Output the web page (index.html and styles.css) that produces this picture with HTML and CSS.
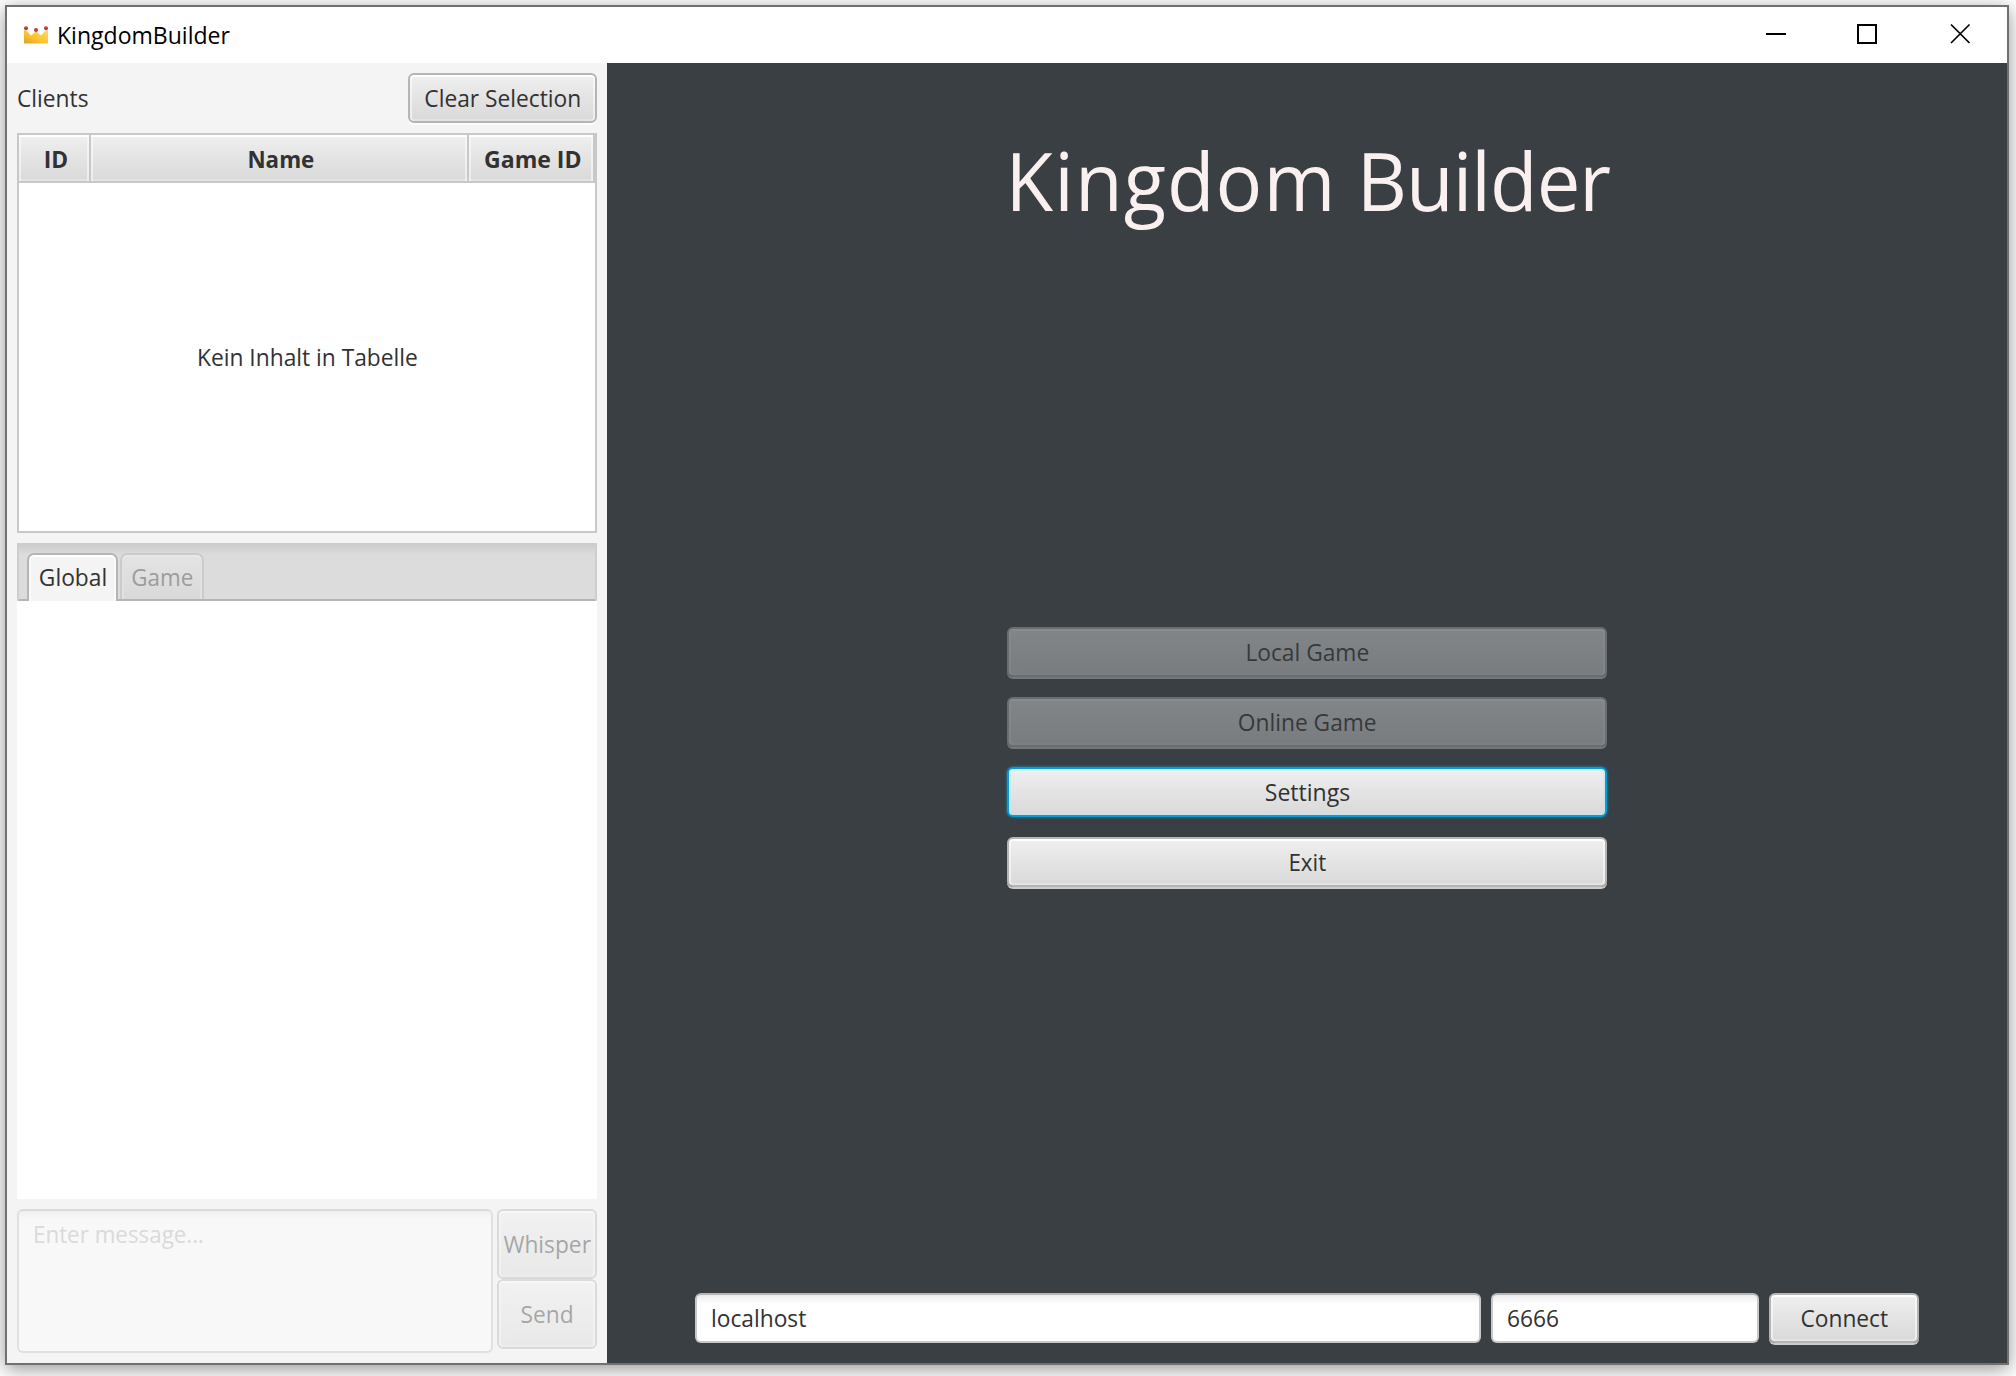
FILE: index.html
```html
<!DOCTYPE html>
<html lang="en">
<head>
<meta charset="utf-8">
<title>KingdomBuilder</title>
<link rel="stylesheet" href="styles.css">
</head>
<body>
<div class="window">
  <header class="titlebar">
    <svg class="crown" width="24" height="18" viewBox="0 0 24 18">
      <defs><linearGradient id="gold" x1="0" y1="1" x2="1" y2="0"><stop offset="0" stop-color="#dba520"/><stop offset=".45" stop-color="#fbc531"/><stop offset="1" stop-color="#ffd66b"/></linearGradient></defs>
      <path d="M0 4.5L2 4L7 9.5L11 6H13L17 9.5L22 4L24 4.5V17.5H0Z" fill="url(#gold)"/>
      <g fill="#bf3b38"><circle cx="2" cy="2.2" r="2"/><circle cx="12" cy="4" r="2"/><circle cx="22" cy="2.2" r="2"/></g>
    </svg>
    <span class="app-name"><span class="t left wide">KingdomBuilder</span></span>
    <svg class="controls" width="206" height="22" viewBox="0 0 206 22" fill="none" stroke="#000" stroke-width="2">
      <path d="M0 11H20M92 2H110V20H92Z"/>
      <path d="M185 1.500L203.500 20M203.500 1.500L185 20" stroke-width="1.700"/>
    </svg>
  </header>
  <div class="body">
    <aside class="sidebar">
      <div class="clients-bar">
        <span class="t left">Clients</span>
        <button class="btn clear"><span class="t">Clear Selection</span></button>
      </div>
      <div class="table">
        <div class="thead">
          <div class="th"><span class="t">ID</span></div>
          <div class="th"><span class="t narrow">Name</span></div>
          <div class="th"><span class="t wide">Game ID</span></div>
        </div>
        <div class="empty"><span class="t">Kein Inhalt in Tabelle</span></div>
      </div>
      <div class="tabs">
        <div class="tab tab-global"><span class="t">Global</span></div>
        <div class="tab tab-game"><span class="t narrow">Game</span></div>
      </div>
      <div class="chat"></div>
      <div class="composer">
        <div class="message"><span class="t left narrow">Enter message...</span></div>
        <div class="actions">
          <button class="btn"><span class="t">Whisper</span></button>
          <button class="btn"><span class="t">Send</span></button>
        </div>
      </div>
    </aside>
    <main class="main">
      <h1 class="heading"><span class="t wide"><span class="loose">Kingdom</span> <span class="tight">Builder</span></span></h1>
      <nav class="menu">
        <button class="btn off"><span class="t">Local Game</span></button>
        <button class="btn off"><span class="t">Online Game</span></button>
        <button class="btn focus"><span class="t wide">Settings</span></button>
        <button class="btn"><span class="t narrow">Exit</span></button>
      </nav>
      <div class="connect">
        <div class="field host"><span class="t left">localhost</span></div>
        <div class="field port"><span class="t left">6666</span></div>
        <button class="btn go"><span class="t">Connect</span></button>
      </div>
    </main>
  </div>
</div>
</body>
</html>
```
FILE: styles.css
```css
* { box-sizing: border-box; }
body {
  margin: 0;
  padding: 5px 7px 11px 5px;
  height: 1376px;
  overflow: hidden;
  background: #fff;
  color: #323232;
  font: 24px/32px "Open Sans", "Noto Sans", sans-serif;
}
/* slightly condensed label text */
.t { display: inline-block; white-space: nowrap; transform: scaleX(.948); }
.wide { transform: scaleX(.96); }
.narrow { transform: scaleX(.932); }
.left { transform-origin: left; }
.loose { letter-spacing: 1.1px; }
.tight { letter-spacing: -1px; }
.window {
  display: flex;
  flex-direction: column;
  height: 1360px;
  border: 2px solid #707070;
  box-shadow: 0 4px 18px rgba(0, 0, 0, .42);
}
.titlebar {
  display: flex;
  align-items: center;
  height: 56px;
  padding: 0 35px 0 17px;
  background: #fff;
  color: #000;
}
.app-name { flex: 1; padding-left: 9px; }
.controls { margin-bottom: 2px; }
.body { display: flex; flex: 1; min-height: 0; }

.sidebar {
  display: flex;
  flex-direction: column;
  width: 600px;
  padding: 10px;
  background: #f4f4f4;
}
.clients-bar {
  display: flex;
  align-items: center;
  justify-content: space-between;
  height: 50px;
  margin-bottom: 10px;
}
.btn {
  display: flex;
  align-items: center;
  justify-content: center;
  height: 50px;
  padding: 0;
  border: 2px solid #b5b5b5;
  border-radius: 6px;
  background: linear-gradient(#efefef, #d9d9d9);
  box-shadow: inset 0 2px #fff, inset 2px 0 rgba(255, 255, 255, .5), inset -2px 0 rgba(255, 255, 255, .5), inset 0 -2px rgba(255, 255, 255, .25), 0 2px rgba(255, 255, 255, .73);
  color: inherit;
  font: inherit;
}
.clear { width: 189px; }

.table { height: 400px; border: 2px solid #c8c8c8; background: #fff; }
.thead {
  display: grid;
  grid-template-columns: 72px 378px 126px;
  width: 576px;
  height: 48px;
  box-shadow: 2px 0 #c8c8c8;
}
.th {
  display: flex;
  align-items: center;
  justify-content: center;
  padding: 2px 0 0 3px;
  border: solid #c8c8c8;
  border-width: 0 2px 2px 0;
  background: linear-gradient(#efefef, #d9d9d9);
  box-shadow: inset 0 2px #fff, inset 2px 0 rgba(255, 255, 255, .5), inset -2px 0 rgba(255, 255, 255, .5), inset 0 -2px rgba(255, 255, 255, .25);
  font-weight: 700;
}
.empty { display: flex; align-items: center; justify-content: center; height: 348px; }

.tabs {
  display: flex;
  align-items: flex-end;
  gap: 2px;
  height: 58px;
  margin-top: 10px;
  padding-left: 10px;
  background: linear-gradient(#b5b5b5, #b5b5b5) bottom / 100% 2px no-repeat, linear-gradient(#cacaca, #dcdcdc 12px);
  box-shadow: inset 2px 2px #cdcdcd, inset -2px 0 #cdcdcd;
}
.tab {
  display: flex;
  align-items: center;
  justify-content: center;
  padding-left: 1px;
  border: 2px solid #b5b5b5;
  border-bottom: 0;
  border-radius: 7px 7px 0 0;
}
.tab-global {
  width: 91px;
  height: 48px;
  padding-bottom: 2px;
  background: #f4f4f4;
  box-shadow: inset 0 2px #fff, inset 2px 0 #fafafa, inset -2px 0 #fafafa;
}
.tab-game {
  width: 84px;
  height: 46px;
  margin-bottom: 2px;
  border-color: #cbcbcb;
  background: linear-gradient(#e4e4e4, #d9d9d9);
  box-shadow: inset 0 2px #e8e8e8, inset 2px 0 #e1e1e1, inset -2px 0 #e1e1e1;
  color: #9c9c9c;
}
.chat { flex: 1; background: #fff; }
.composer { display: flex; gap: 4px; height: 144px; margin-top: 10px; }
.message {
  width: 476px;
  padding: 7px 14px;
  border: 2px solid #e0e0e0;
  border-top-color: #dadada;
  border-radius: 6px;
  background: linear-gradient(#f0f0f0, #f8f8f8 8px);
  color: #dadada;
}
.actions { width: 100px; }
.actions .btn { width: 100%; height: 70px; opacity: .4; }

.main {
  display: flex;
  flex-direction: column;
  align-items: center;
  width: 1400px;
  background: #3a3f43;
}
.heading { margin: 64px 0 0; padding-left: 1px; color: #f9f0ef; font-size: 81px; font-weight: 400; line-height: 106px; }
.menu { display: grid; gap: 20px; width: 600px; margin-top: 394px; }
.off { opacity: .4; }
.focus {
  border-color: #039ed3;
  box-shadow: inset 0 0 0 2px rgba(190, 230, 243, .5), inset 0 2px rgba(255, 255, 255, .6), 0 0 3px #039ed3;
}
.connect { display: flex; gap: 10px; margin-top: 406px; }
.field {
  height: 50px;
  padding: 7px 14px;
  border: 2px solid #c8c8c8;
  border-top-color: #b5b5b5;
  border-radius: 6px;
  background: linear-gradient(#ececec, #fff 9px);
}
.host { width: 786px; }
.port { width: 268px; }
.go { width: 150px; }
```
